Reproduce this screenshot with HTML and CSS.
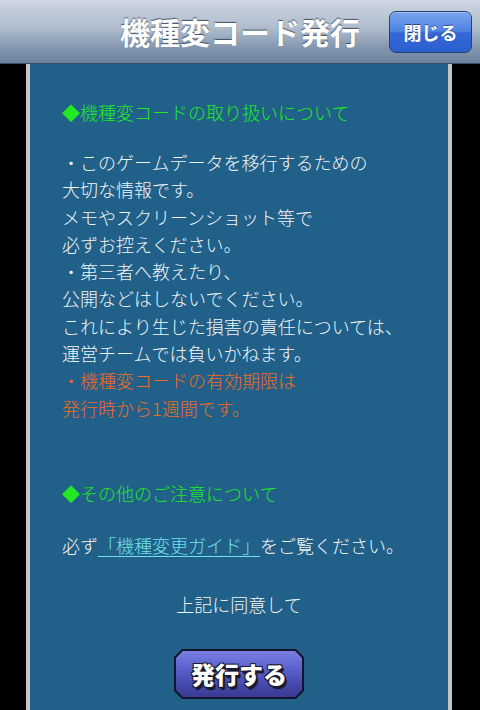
FILE: index.html
```html
<!DOCTYPE html>
<html lang="ja">
<head>
<meta charset="utf-8">
<title>機種変コード発行</title>
<link rel="stylesheet" href="styles.css">
</head>
<body>
<header class="header">
  <div class="spacer"></div>
  <h1 class="title">機種変コード発行</h1>
  <button class="close-btn">閉じる</button>
</header>
<main class="panel">
  <h2 class="heading">◆機種変コードの取り扱いについて</h2>
  <p class="body">・このゲームデータを移行するための<br>大切な情報です。<br>メモやスクリーンショット等で<br>必ずお控えください。<br>・第三者へ教えたり、<br>公開などはしないでください。<br>これにより生じた損害の責任については、<br>運営チームでは負いかねます。<br><span class="warn">・機種変コードの有効期限は<br>発行時から1週間です。</span></p>
  <h2 class="heading heading-2">◆その他のご注意について</h2>
  <p class="body guide">必ず<a class="link" href="#">「機種変更ガイド」</a>をご覧ください。</p>
  <p class="body agree">上記に同意して</p>
  <div class="issue-wrap">
    <div class="issue-btn"><div class="issue-inner">発行する</div></div>
  </div>
</main>
</body>
</html>
```
FILE: styles.css
```css
html, body {
  margin: 0;
  padding: 0;
  height: 100%;
}
body {
  background: #000;
  font-family: "Noto Sans CJK JP", "Noto Sans", sans-serif;
  overflow: hidden;
}
.header {
  height: 64px;
  box-sizing: border-box;
  display: grid;
  grid-template-columns: 1fr auto 1fr;
  align-items: center;
  background: linear-gradient(to bottom, #cdd6e1 0%, #aebccc 45%, #8597b0 75%, #6b829f 100%);
  border-bottom: 1px solid #3e4f66;
}
.title {
  margin: 0;
  font-size: 30px;
  font-weight: 700;
  color: #fff;
  letter-spacing: 0;
  text-shadow: 0 -1px 1px rgba(40, 55, 80, 0.8);
  line-height: 1;
  padding-bottom: 2px;
}
.close-btn {
  justify-self: end;
  margin-right: 8px;
  width: 83px;
  height: 42px;
  border: 1px solid #24406f;
  border-radius: 7px;
  background: linear-gradient(to bottom, #7aa4ee 0%, #4f82e2 48%, #3568d6 52%, #2d60cf 100%);
  color: #fff;
  font-family: "Noto Sans CJK JP", sans-serif;
  font-size: 18px;
  font-weight: 700;
  text-shadow: 0 -1px 0 rgba(20, 40, 90, 0.7);
  padding: 0;
  box-shadow: inset 0 1px 0 rgba(255,255,255,0.3);
}
.panel {
  box-sizing: border-box;
  margin-left: 26px;
  width: 426px;
  height: calc(100% - 64px);
  background: #206089;
  border-left: 4px solid #c4c6c8;
  border-right: 4px solid #c4c6c8;
  padding: 35px 0 0 32px;
}
.heading {
  margin: 0;
  font-size: 18px;
  font-weight: 300;
  line-height: 27.3px;
  color: #22ea22;
}
.body {
  margin: 22.7px 0 0 0;
  font-size: 18px;
  font-weight: 300;
  line-height: 27.3px;
  color: #f2f5f7;
}
.warn {
  color: #f06c1e;
}
.heading-2 {
  margin-top: 57.7px;
}
.guide {
  margin-top: 24.7px;
}
.link {
  color: #6fe2ea;
  text-decoration: underline;
  text-underline-offset: 3px;
}
.agree {
  margin-top: 31.7px;
  text-align: center;
  padding-right: 32px;
}
.issue-wrap {
  display: flex;
  justify-content: center;
  padding-right: 32px;
  margin-top: 31px;
}
.issue-btn {
  width: 130px;
  height: 50px;
  background: #15152a;
  clip-path: polygon(8px 0, 122px 0, 130px 8px, 130px 42px, 122px 50px, 8px 50px, 0 42px, 0 8px);
  padding: 2px;
  box-sizing: border-box;
}
.issue-inner {
  width: 100%;
  height: 100%;
  background: linear-gradient(to bottom, #7a80e2 0%, #5a60cc 40%, #4448aa 75%, #383a92 100%);
  clip-path: polygon(7px 0, calc(100% - 7px) 0, 100% 7px, 100% calc(100% - 7px), calc(100% - 7px) 100%, 7px 100%, 0 calc(100% - 7px), 0 7px);
  display: flex;
  align-items: center;
  justify-content: center;
  color: #fff;
  font-size: 24px;
  font-weight: 900;
  letter-spacing: 0;
  text-shadow: -1px -1px 0 #1a1a30, 1px -1px 0 #1a1a30, -1px 1px 0 #1a1a30, 1px 1px 0 #1a1a30, 2px 2px 0 #1a1a30, 2px 3px 1px #111;
}
```
